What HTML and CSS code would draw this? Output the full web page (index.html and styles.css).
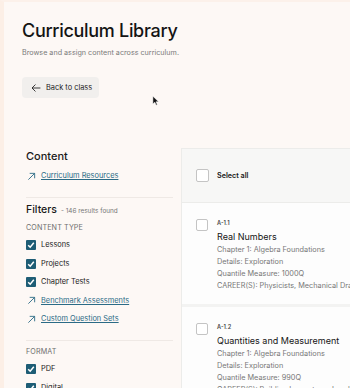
FILE: index.html
```html
<!DOCTYPE html>
<html>
<head>
<meta charset="utf-8">
<link rel="stylesheet" href="styles.css">
</head>
<body>
<div class="page">
  <header class="head">
    <h1 class="title">Curriculum Library</h1>
    <p class="subtitle">Browse and assign content across curriculum.</p>
    <button class="back"><svg class="back-icon" viewBox="0 0 12 10"><path d="M11 5H1.5M5 1 1 5l4 4" fill="none" stroke="#222" stroke-width="1.1" stroke-linecap="round" stroke-linejoin="round"/></svg><span>Back to class</span></button>
  </header>
  <div class="layout">
    <aside class="side">
      <h2 class="side-h">Content</h2>
      <a class="link"><svg class="arrow" viewBox="0 0 10 10"><path d="M1.5 8.5 8.5 1.5M3 1.5h5.5V7" fill="none" stroke="#2b6b86" stroke-width="1"/></svg><span>Curriculum Resources</span></a>
      <hr class="div">
      <div class="filters-h"><span class="filters">Filters</span><span class="count">- 146 results found</span></div>
      <div class="group">CONTENT TYPE</div>
      <label class="chk"><span class="box"><svg viewBox="0 0 10 10"><path d="M2.2 5.2 4.2 7.2 7.8 2.8" fill="none" stroke="#fff" stroke-width="1.5"/></svg></span>Lessons</label>
      <label class="chk"><span class="box"><svg viewBox="0 0 10 10"><path d="M2.2 5.2 4.2 7.2 7.8 2.8" fill="none" stroke="#fff" stroke-width="1.5"/></svg></span>Projects</label>
      <label class="chk"><span class="box"><svg viewBox="0 0 10 10"><path d="M2.2 5.2 4.2 7.2 7.8 2.8" fill="none" stroke="#fff" stroke-width="1.5"/></svg></span>Chapter Tests</label>
      <a class="link sub"><svg class="arrow" viewBox="0 0 10 10"><path d="M1.5 8.5 8.5 1.5M3 1.5h5.5V7" fill="none" stroke="#2b6b86" stroke-width="1"/></svg><span>Benchmark Assessments</span></a>
      <a class="link sub"><svg class="arrow" viewBox="0 0 10 10"><path d="M1.5 8.5 8.5 1.5M3 1.5h5.5V7" fill="none" stroke="#2b6b86" stroke-width="1"/></svg><span>Custom Question Sets</span></a>
      <hr class="div div2">
      <div class="group g2">FORMAT</div>
      <label class="chk"><span class="box"><svg viewBox="0 0 10 10"><path d="M2.2 5.2 4.2 7.2 7.8 2.8" fill="none" stroke="#fff" stroke-width="1.5"/></svg></span>PDF</label>
      <label class="chk"><span class="box"><svg viewBox="0 0 10 10"><path d="M2.2 5.2 4.2 7.2 7.8 2.8" fill="none" stroke="#fff" stroke-width="1.5"/></svg></span>Digital</label>
    </aside>
    <section class="panel">
      <div class="panel-head"><span class="cb"></span><span class="select">Select all</span></div>
      <div class="row">
        <span class="cb"></span>
        <div class="info">
          <div class="code">A-1.1</div>
          <div class="name">Real Numbers</div>
          <div class="meta">Chapter 1: Algebra Foundations</div>
          <div class="meta">Details: Exploration</div>
          <div class="meta">Quantile Measure: 1000Q</div>
          <div class="meta">CAREER(S): Physicists, Mechanical Drafters</div>
        </div>
      </div>
      <div class="row">
        <span class="cb"></span>
        <div class="info">
          <div class="code">A-1.2</div>
          <div class="name">Quantities and Measurement</div>
          <div class="meta">Chapter 1: Algebra Foundations</div>
          <div class="meta">Details: Exploration</div>
          <div class="meta">Quantile Measure: 990Q</div>
          <div class="meta">CAREER(S): Building Inspectors, Jewelers</div>
        </div>
      </div>
    </section>
  </div>
  <svg class="cursor" viewBox="0 0 8 12"><path d="M1 1v9l2.2-2 1.6 3.3 1.3-.6L4.5 7.5H7.5z" fill="#111" stroke="#fff" stroke-width=".6"/></svg>
</div>
</body>
</html>
```
FILE: styles.css
```css
html, body { margin: 0; padding: 0; }
body {
  width: 350px; height: 388px; overflow: hidden;
  background: #fdf8f5;
  font-family: Inter, "Noto Sans", sans-serif;
  color: #1a1a1a;
}
.page {
  position: relative;
  height: 388px;
  overflow: hidden;
  box-sizing: border-box;
  border-left: 4px solid #fcefe6;
  border-top: 2px solid #fcf1ea;
  padding-left: 18px;
}
.head { padding-top: 17px; }
.title {
  margin: 0; font-size: 18px; font-weight: 500; line-height: 24px;
  letter-spacing: -0.3px; color: #141414;
}
.subtitle { margin: 5px 0 0; font-size: 7.2px; color: #7a7a7a; line-height: 10px; }
.back {
  margin-top: 19px;
  display: flex; align-items: center; gap: 5px;
  height: 21px; padding: 0 7px 0 9px;
  border: none; border-radius: 4px; background: #f1efed;
  font-family: inherit; font-size: 7.4px; color: #222;
}
.back-icon { width: 10px; height: 8px; }
.layout { display: flex; margin-top: 51px; gap: 8px; }
.side { width: 147px; padding-left: 4px; flex: none; }
.side-h { margin: 0; font-size: 11px; font-weight: 500; line-height: 14px; }
.link {
  display: flex; align-items: center; gap: 5px; margin-top: 8px;
  font-size: 7.4px; color: #2b6b86; text-decoration: underline; line-height: 10px;
}
.link .arrow { width: 9px; height: 9px; flex: none; margin-left: 1px; }
.div { border: none; border-top: 1px solid #efe9e5; margin: 16px 0 0; }
.filters-h { margin-top: 5px; display: flex; align-items: baseline; gap: 4px; }
.filters { font-size: 10.5px; font-weight: 500; line-height: 13px; }
.count { font-size: 6.4px; color: #777; }
.group { margin-top: 7px; font-size: 7.2px; color: #6f6f6f; line-height: 10px; letter-spacing: 0.1px; }
.g2 { margin-top: 6px; }
.chk { display: flex; align-items: center; gap: 5px; margin-top: 8.5px; font-size: 7.4px; line-height: 10px; color: #222; }
.group + .chk { margin-top: 7px; }
.box { width: 10px; height: 10px; background: #1e5d75; border-radius: 1px; display: flex; flex: none; }
.box svg { width: 10px; height: 10px; }
.link.sub { margin-top: 8.5px; }
.div2 { margin-top: 16px; }
.panel {
  flex: none; width: 300px;
  border-top: 1px solid #ececea; border-left: 1px solid #ececea;
  background: #fdfdfd;
  margin-top: -1px;
  overflow: hidden;
}
.panel-head {
  height: 53px; background: #f7f7f6; border-bottom: 1px solid #ececea;
  display: flex; align-items: center; gap: 8px; padding-left: 14px;
}
.cb { width: 11px; height: 11px; border: 1px solid #c4c4c4; border-radius: 2px; background: #fff; flex: none; }
.row .cb { width: 10px; height: 10px; }
.select { font-size: 7.2px; font-weight: 600; color: #1a1a1a; }
.row { display: flex; gap: 9px; padding: 16px 0 12px 14px; border-bottom: 3px solid #f3f3f2; }
.info { display: flex; flex-direction: column; }
.code { font-size: 5.6px; font-weight: 600; color: #444; line-height: 8px; }
.name { font-size: 9px; line-height: 13px; margin-top: 2.5px; margin-bottom: 1.5px; color: #151515; }
.meta { font-size: 7.3px; color: #777; line-height: 12px; white-space: nowrap; }
.cursor { position: absolute; left: 148px; top: 93px; width: 7px; height: 11px; }
```
